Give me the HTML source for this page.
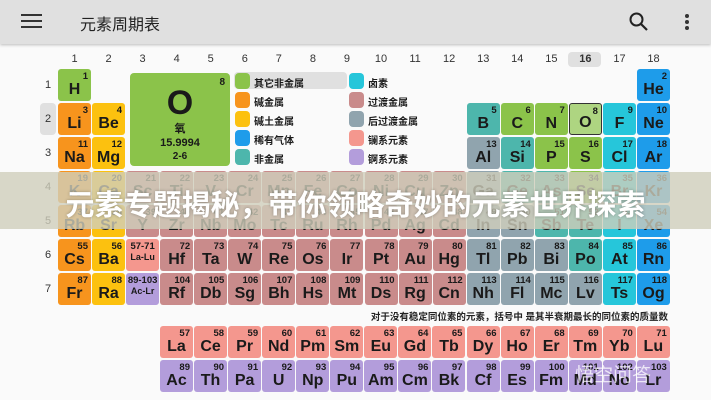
<!DOCTYPE html>
<html><head><meta charset="utf-8"><style>
*{margin:0;padding:0;box-sizing:border-box}
body{width:711px;height:400px;overflow:hidden;background:#fafafa;font-family:"Liberation Sans","Noto Sans CJK SC",sans-serif;position:relative;color:#1a1a1a}
.bar{position:absolute;left:0;top:0;width:711px;height:44px;background:#e0e0e0;box-shadow:0 1px 3px rgba(0,0,0,.25)}
.c{position:absolute;width:33px;height:32px;border-radius:3px}
.c .n{position:absolute;right:3px;top:2px;font-size:9.5px;font-weight:bold}
.c .s{position:absolute;left:0;right:0;bottom:3px;text-align:center;font-size:16px;font-weight:bold;line-height:16px}
.g{position:absolute;top:53px;width:33px;text-align:center;font-size:11px;color:#333}
.p{position:absolute;left:40px;width:16px;text-align:center;font-size:11px;color:#333}
.lg{position:absolute;width:15px;height:16px;border-radius:4px}
.lt{position:absolute;font-size:10px;font-weight:bold}
</style></head><body>
<div class="bar">
<div style="position:absolute;left:21px;top:14px;width:21px;height:2px;background:#333;box-shadow:0 6px 0 #333,0 12px 0 #333"></div>
<div style="position:absolute;left:80px;top:11px;font-size:16px;color:#222">元素周期表</div>
<svg style="position:absolute;left:628px;top:11px" width="22" height="22" viewBox="0 0 22 22"><circle cx="8.5" cy="8.5" r="6" fill="none" stroke="#222" stroke-width="2"/><line x1="13" y1="13" x2="19" y2="19" stroke="#222" stroke-width="2.2"/></svg>
<div style="position:absolute;left:685px;top:14px;width:4px;height:4px;border-radius:2px;background:#333;box-shadow:0 6px 0 #333,0 12px 0 #333"></div>
</div>
<div style="position:absolute;left:568px;top:52px;width:33px;height:15px;background:#e0e0e0;border-radius:4px"></div>
<div style="position:absolute;left:40px;top:103px;width:16px;height:32px;background:#e0e0e0;border-radius:4px"></div>
<div style="position:absolute;left:234px;top:72px;width:113px;height:17px;background:#e0e0e0;border-radius:4px"></div>
<div id="t"></div>
<div style="position:absolute;left:130px;top:73px;width:100px;height:93px;background:#8bc34a;border-radius:4px">
<div style="position:absolute;right:5px;top:4px;font-size:10px;font-weight:bold">8</div>
<div style="position:absolute;left:0;right:0;top:12px;text-align:center;font-size:34px;line-height:36px;font-weight:bold">O</div>
<div style="position:absolute;left:0;right:0;top:50px;text-align:center;font-size:11px;line-height:12px;font-weight:bold">氧</div>
<div style="position:absolute;left:0;right:0;top:64px;text-align:center;font-size:11px;line-height:12px;font-weight:bold">15.9994</div>
<div style="position:absolute;left:0;right:0;top:78px;text-align:center;font-size:10px;line-height:11px;font-weight:bold">2-6</div>
</div>
<div id="lg"></div>
<div style="position:absolute;right:43px;top:309px;font-size:9.5px;font-weight:bold;color:#222">对于没有稳定同位素的元素，括号中 是其半衰期最长的同位素的质量数</div>
<div style="position:absolute;left:0;top:172px;width:711px;height:57px;background:rgba(208,206,188,.8)"></div>
<div style="position:absolute;left:0;width:711px;top:182px;text-align:center;font-size:29px;font-weight:bold;color:#fff;text-shadow:0 0 3px rgba(0,0,0,.3)">元素专题揭秘，带你领略奇妙的元素世界探索</div>
<div style="position:absolute;left:575px;top:360px;font-size:19px;color:rgba(255,255,255,.75)">悟空问答</div>
<script>
var C={nm:'#8bc34a',al:'#f7941d',ae:'#fcc10f',ng:'#1e9cea',me:'#4db6ac',ha:'#26c6da',tr:'#c98b8b',pt:'#90a4ae',la:'#f4978e',ac:'#b39ddb'};
var rows=[
[[1,'H',1,'nm'],[18,'He',2,'ng']],
[[1,'Li',3,'al'],[2,'Be',4,'ae'],[13,'B',5,'me'],[14,'C',6,'nm'],[15,'N',7,'nm'],[16,'O',8,'sel'],[17,'F',9,'ha'],[18,'Ne',10,'ng']],
[[1,'Na',11,'al'],[2,'Mg',12,'ae'],[13,'Al',13,'pt'],[14,'Si',14,'me'],[15,'P',15,'nm'],[16,'S',16,'nm'],[17,'Cl',17,'ha'],[18,'Ar',18,'ng']]
];
var r4='K Ca Sc Ti V Cr Mn Fe Co Ni Cu Zn Ga Ge As Se Br Kr'.split(' '),c4='al ae tr tr tr tr tr tr tr tr tr tr pt me me nm ha ng'.split(' ');
var r5='Rb Sr Y Zr Nb Mo Tc Ru Rh Pd Ag Cd In Sn Sb Te I Xe'.split(' '),c5='al ae tr tr tr tr tr tr tr tr tr tr pt pt me me ha ng'.split(' ');
var a=[],b=[];for(var i=0;i<18;i++){a.push([i+1,r4[i],19+i,c4[i]]);b.push([i+1,r5[i],37+i,c5[i]]);}
rows.push(a,b);
var r6='Cs Ba La-Lu Hf Ta W Re Os Ir Pt Au Hg Tl Pb Bi Po At Rn'.split(' '),n6=[55,56,'57-71',72,73,74,75,76,77,78,79,80,81,82,83,84,85,86],c6='al ae la tr tr tr tr tr tr tr tr tr pt pt pt me ha ng'.split(' ');
var r7='Fr Ra Ac-Lr Rf Db Sg Bh Hs Mt Ds Rg Cn Nh Fl Mc Lv Ts Og'.split(' '),n7=[87,88,'89-103',104,105,106,107,108,109,110,111,112,113,114,115,116,117,118],c7='al ae ac tr tr tr tr tr tr tr tr tr pt pt pt pt ha ng'.split(' ');
a=[];b=[];for(i=0;i<18;i++){a.push([i+1,r6[i],n6[i],c6[i]]);b.push([i+1,r7[i],n7[i],c7[i]]);}
rows.push(a,b);
var h='';
function cell(x,y,s,n,c){var bg=c=='sel'?'#aed581':C[c];var bd=c=='sel'?'border:1px solid #333;':'';var small=String(n).indexOf('-')>0;
return '<div class="c" style="left:'+x+'px;top:'+y+'px;background:'+bg+';'+bd+'"><div class="n" style="'+(small?'right:auto;left:0;width:33px;text-align:center;':'')+'">'+n+'</div><div class="s" style="'+(small?'font-size:9px;bottom:6px;':'')+'">'+s+'</div></div>';}
for(var r=0;r<7;r++){var y=69+r*34;h+='<div class="p" style="top:'+(y+10)+'px">'+(r+1)+'</div>';
rows[r].forEach(function(e){h+=cell(58+(e[0]-1)*34.06,y,e[1],e[2],e[3]);});}
for(i=1;i<=18;i++)h+='<div class="g" style="left:'+(58+(i-1)*34.06)+'px;'+(i==16?'font-weight:bold':'')+'">'+i+'</div>';
var L='La Ce Pr Nd Pm Sm Eu Gd Tb Dy Ho Er Tm Yb Lu'.split(' '),A='Ac Th Pa U Np Pu Am Cm Bk Cf Es Fm Md No Lr'.split(' ');
for(i=0;i<15;i++){h+=cell(160+i*34.06,326,L[i],57+i,'la');h+=cell(160+i*34.06,360,A[i],89+i,'ac');}
document.getElementById('t').innerHTML=h;
var lg=[['nm','其它非金属'],['al','碱金属'],['ae','碱土金属'],['ng','稀有气体'],['me','非金属']],lg2=[['ha','卤素'],['tr','过渡金属'],['pt','后过渡金属'],['la','镧系元素'],['ac','锕系元素']],g='';
for(i=0;i<5;i++){var yy=73+i*19;g+='<div class="lg" style="left:235px;top:'+yy+'px;background:'+C[lg[i][0]]+'"></div><div class="lt" style="left:254px;top:'+(yy+2)+'px">'+lg[i][1]+'</div>';
g+='<div class="lg" style="left:349px;top:'+yy+'px;background:'+C[lg2[i][0]]+'"></div><div class="lt" style="left:368px;top:'+(yy+2)+'px">'+lg2[i][1]+'</div>';}
document.getElementById('lg').innerHTML=g;
</script>
</body></html>
